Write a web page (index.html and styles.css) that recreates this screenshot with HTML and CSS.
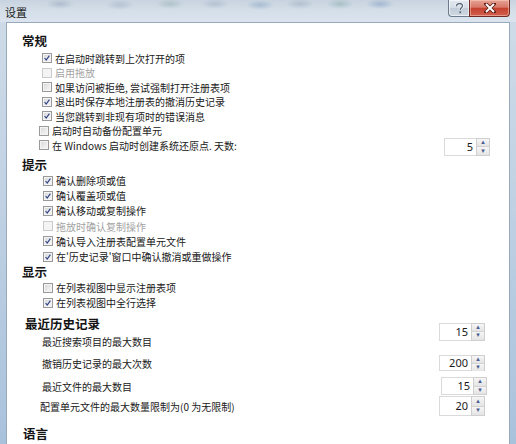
FILE: index.html
```html
<!DOCTYPE html>
<html lang="zh-CN">
<head>
<meta charset="utf-8">
<title>设置</title>
<link rel="stylesheet" href="styles.css">
</head>
<body>
<div class="window">
  <div class="titlebar">
    <span class="title">设置</span>
    <div class="controls">
      <div class="cbtn help">
        <svg width="9" height="11" viewBox="0 0 9 11"><path d="M1.5 3.2 C1.5 1.2 3 0.6 4.5 0.6 C6.3 0.6 7.5 1.6 7.5 3 C7.5 4.6 5.2 5 5.2 7" fill="none" stroke="#f4f6f8" stroke-width="3"/><path d="M1.5 3.2 C1.5 1.2 3 0.6 4.5 0.6 C6.3 0.6 7.5 1.6 7.5 3 C7.5 4.6 5.2 5 5.2 7" fill="none" stroke="#5b6878" stroke-width="1.3"/><rect x="4.3" y="8.4" width="1.8" height="1.8" fill="#5b6878"/></svg>
      </div>
      <div class="cbtn close">
        <svg width="12" height="10" viewBox="0 0 12 10"><path d="M2 1 L10 9 M10 1 L2 9" stroke="#5a1a14" stroke-width="3.6" stroke-linecap="square"/><path d="M2 1 L10 9 M10 1 L2 9" stroke="#ffffff" stroke-width="2"/></svg>
      </div>
    </div>
  </div>
  <div class="client">
    <section class="group">
      <h2 class="heading h-general">常规</h2>
      <div class="rows r-general">
        <div class="row in-a"><span class="cb on"><svg viewBox="0 0 10 10"><path d="M2 5 L4 7.5 L8 2" fill="none" stroke="#2c3f86" stroke-width="1.4"/></svg></span>在启动时跳转到上次打开的项</div>
        <div class="row in-a dis"><span class="cb"></span>启用拖放</div>
        <div class="row in-a"><span class="cb"></span>如果访问被拒绝, 尝试强制打开注册表项</div>
        <div class="row in-a"><span class="cb on"><svg viewBox="0 0 10 10"><path d="M2 5 L4 7.5 L8 2" fill="none" stroke="#2c3f86" stroke-width="1.4"/></svg></span>退出时保存本地注册表的撤消历史记录</div>
        <div class="row in-a"><span class="cb on"><svg viewBox="0 0 10 10"><path d="M2 5 L4 7.5 L8 2" fill="none" stroke="#2c3f86" stroke-width="1.4"/></svg></span>当您跳转到非现有项时的错误消息</div>
        <div class="row in-b"><span class="cb"></span>启动时自动备份配置单元</div>
        <div class="row in-b spin-row"><span class="cb"></span>在 Windows 启动时创建系统还原点. 天数:
          <div class="spin"><span class="val">5</span><span class="arrows"><span class="up">▴</span><span class="dn">▾</span></span></div>
        </div>
      </div>
    </section>
    <section class="group">
      <h2 class="heading h-tips">提示</h2>
      <div class="rows r-tips">
        <div class="row in-c"><span class="cb on"><svg viewBox="0 0 10 10"><path d="M2 5 L4 7.5 L8 2" fill="none" stroke="#2c3f86" stroke-width="1.4"/></svg></span>确认删除项或值</div>
        <div class="row in-c"><span class="cb on"><svg viewBox="0 0 10 10"><path d="M2 5 L4 7.5 L8 2" fill="none" stroke="#2c3f86" stroke-width="1.4"/></svg></span>确认覆盖项或值</div>
        <div class="row in-c"><span class="cb on"><svg viewBox="0 0 10 10"><path d="M2 5 L4 7.5 L8 2" fill="none" stroke="#2c3f86" stroke-width="1.4"/></svg></span>确认移动或复制操作</div>
        <div class="row in-c dis"><span class="cb"></span>拖放时确认复制操作</div>
        <div class="row in-c"><span class="cb on"><svg viewBox="0 0 10 10"><path d="M2 5 L4 7.5 L8 2" fill="none" stroke="#2c3f86" stroke-width="1.4"/></svg></span>确认导入注册表配置单元文件</div>
        <div class="row in-c"><span class="cb on"><svg viewBox="0 0 10 10"><path d="M2 5 L4 7.5 L8 2" fill="none" stroke="#2c3f86" stroke-width="1.4"/></svg></span>在'历史记录'窗口中确认撤消或重做操作</div>
      </div>
    </section>
    <section class="group">
      <h2 class="heading h-display">显示</h2>
      <div class="rows r-display">
        <div class="row in-c"><span class="cb"></span>在列表视图中显示注册表项</div>
        <div class="row in-c"><span class="cb on"><svg viewBox="0 0 10 10"><path d="M2 5 L4 7.5 L8 2" fill="none" stroke="#2c3f86" stroke-width="1.4"/></svg></span>在列表视图中全行选择</div>
      </div>
    </section>
    <section class="group">
      <h2 class="heading h-history">最近历史记录</h2>
      <div class="hrows">
        <div class="hrow hr1"><span class="lbl">最近搜索项目的最大数目</span>
          <div class="spin lift"><span class="val">15</span><span class="arrows"><span class="up">▴</span><span class="dn">▾</span></span></div></div>
        <div class="hrow hr2"><span class="lbl">撤销历史记录的最大次数</span>
          <div class="spin short"><span class="val">200</span><span class="arrows"><span class="up">▴</span><span class="dn">▾</span></span></div></div>
        <div class="hrow hr3"><span class="lbl">最近文件的最大数目</span>
          <div class="spin nudge"><span class="val">15</span><span class="arrows"><span class="up">▴</span><span class="dn">▾</span></span></div></div>
        <div class="hrow hr4"><span class="lbl lbl-out">配置单元文件的最大数量限制为(0 为无限制)</span>
          <div class="spin tall"><span class="val">20</span><span class="arrows"><span class="up">▴</span><span class="dn">▾</span></span></div></div>
      </div>
    </section>
    <section class="group">
      <h2 class="heading h-lang">语言</h2>
    </section>
  </div>
</div>
</body>
</html>
```

FILE: styles.css
```css
html, body {
  margin: 0;
  padding: 0;
}
body {
  width: 516px;
  height: 444px;
  overflow: hidden;
  font-family: "Noto Sans CJK SC", "Noto Sans", sans-serif;
  color: #1e1e1e;
}
.window {
  width: 516px;
  height: 444px;
  display: flex;
  flex-direction: column;
  background: linear-gradient(180deg, #cfdbe8 0%, #c2d3e4 40%, #a9c2dc 100%);
}
.titlebar {
  height: 22px;
  flex: none;
  display: flex;
  align-items: flex-start;
  background:
    radial-gradient(ellipse 14px 5px at 60px 4px, rgba(90,110,140,0.25), transparent),
    radial-gradient(ellipse 14px 5px at 120px 5px, rgba(90,110,140,0.2), transparent),
    radial-gradient(ellipse 14px 5px at 170px 4px, rgba(80,120,110,0.22), transparent),
    radial-gradient(ellipse 14px 5px at 215px 4px, rgba(90,110,140,0.2), transparent),
    radial-gradient(ellipse 14px 5px at 260px 5px, rgba(60,110,160,0.25), transparent),
    radial-gradient(ellipse 14px 5px at 300px 4px, rgba(90,110,140,0.22), transparent),
    radial-gradient(ellipse 14px 5px at 340px 4px, rgba(60,130,110,0.25), transparent),
    radial-gradient(ellipse 14px 5px at 380px 4px, rgba(70,110,170,0.3), transparent),
    linear-gradient(180deg, #c7d3df 0%, #d5dfe9 50%, #dbe4ee 100%);
}
.title {
  margin: 5px 0 0 5px;
  font-size: 11px;
  line-height: 14px;
  color: #1a1a1a;
}
.controls {
  margin-left: auto;
  margin-right: 6px;
  display: flex;
}
.cbtn {
  height: 17px;
  box-sizing: border-box;
  display: flex;
  align-items: center;
  justify-content: center;
  border: 1px solid #6c7a8c;
  border-top: none;
}
.help {
  width: 21px;
  border-radius: 0 0 0 4px;
  border-right: none;
  background: linear-gradient(180deg, #e3e9f0 0%, #d3dce6 50%, #c1ccd8 51%, #cfd9e4 100%);
  box-shadow: inset 0 0 0 1px rgba(255,255,255,0.6);
}
.close {
  width: 41px;
  border-radius: 0 0 4px 0;
  border-color: #6e2a22;
  background: linear-gradient(180deg, #e5a393 0%, #d9786a 45%, #c4412f 52%, #d2604e 100%);
  box-shadow: inset 0 0 0 1px rgba(255,210,200,0.5);
}
.client {
  flex: 1;
  margin: 0 6px;
  background: #ffffff;
  border: 1px solid #98a9bc;
  border-bottom: none;
  padding: 0 24px 0 15px;
  overflow: hidden;
}
.heading {
  margin: 0;
  font-size: 12.5px;
  font-weight: bold;
  line-height: 16px;
  height: 16px;
  color: #141414;
}
.h-general { margin-top: 10px; margin-bottom: 2px; }
.h-tips { margin-top: 4.5px; }
.h-display { margin-top: 0; }
.h-history { margin-top: 6px; padding-left: 3px; }
.h-lang { margin-top: 10px; padding-left: 1px; }
.row {
  display: flex;
  align-items: center;
  font-size: 10px;
  white-space: nowrap;
  color: #202020;
}
.r-general .row { height: 14.5px; }
.r-tips .row { height: 15.2px; }
.r-display .row { height: 15px; }
.in-a { padding-left: 20px; }
.in-b { padding-left: 17px; }
.in-c { padding-left: 21px; }
.dis { color: #a3a3a3; }
.cb {
  width: 10px;
  height: 10px;
  box-sizing: border-box;
  margin-right: 3px;
  flex: none;
  border: 1px solid #9a9a9a;
  background: linear-gradient(135deg, #d6d6d6 0%, #ececec 60%, #f8f8f8 100%);
  box-shadow: inset 0 0 0 1px #f4f4f4;
  display: flex;
}
.cb svg {
  width: 8px;
  height: 8px;
}
.dis .cb {
  border-color: #cbcbcb;
  background: #f4f4f4;
  box-shadow: none;
}
.spin-row .spin {
  margin-left: auto;
  margin-right: -5px;
  margin-top: 3px;
}
.spin {
  display: flex;
  width: 46px;
  height: 18px;
  flex: none;
}
.spin .val {
  flex: 1;
  box-sizing: border-box;
  border: 1px solid #dadada;
  border-right: none;
  text-align: right;
  padding-right: 3px;
  font-family: "Noto Sans", "DejaVu Sans", sans-serif;
  font-size: 11px;
  line-height: 16px;
  color: #1a1a1a;
  background: #fff;
}
.arrows {
  width: 14px;
  display: flex;
  flex-direction: column;
  box-sizing: border-box;
  border: 1px solid #cfcfcf;
  background: #f3f3f3;
}
.arrows span {
  flex: 1;
  display: flex;
  align-items: center;
  justify-content: center;
  font-size: 7px;
  line-height: 1;
  color: #4b5e92;
  background: linear-gradient(180deg, #f6f6f6 0%, #e4e4e4 100%);
  font-family: "DejaVu Sans", sans-serif;
}
.arrows .up { border-bottom: 1px solid #d2d2d2; }
.hrows {
  display: flex;
  flex-direction: column;
}
.hrow {
  display: flex;
  align-items: center;
  justify-content: space-between;
  font-size: 10px;
  white-space: nowrap;
  color: #202020;
  padding-left: 20px;
}
.hr1 { height: 18px; }
.hr2 { height: 26px; }
.hr3 { height: 20px; }
.hr4 { height: 20px; }
.lbl-out { margin-left: -2px; }
.spin.lift { margin-bottom: 19px; }
.spin.short { height: 16px; }
.spin.short .val { line-height: 14px; }
.spin.nudge { margin-right: -2px; }
.spin.tall { height: 20px; }
.spin.tall .val { line-height: 18px; }
```
